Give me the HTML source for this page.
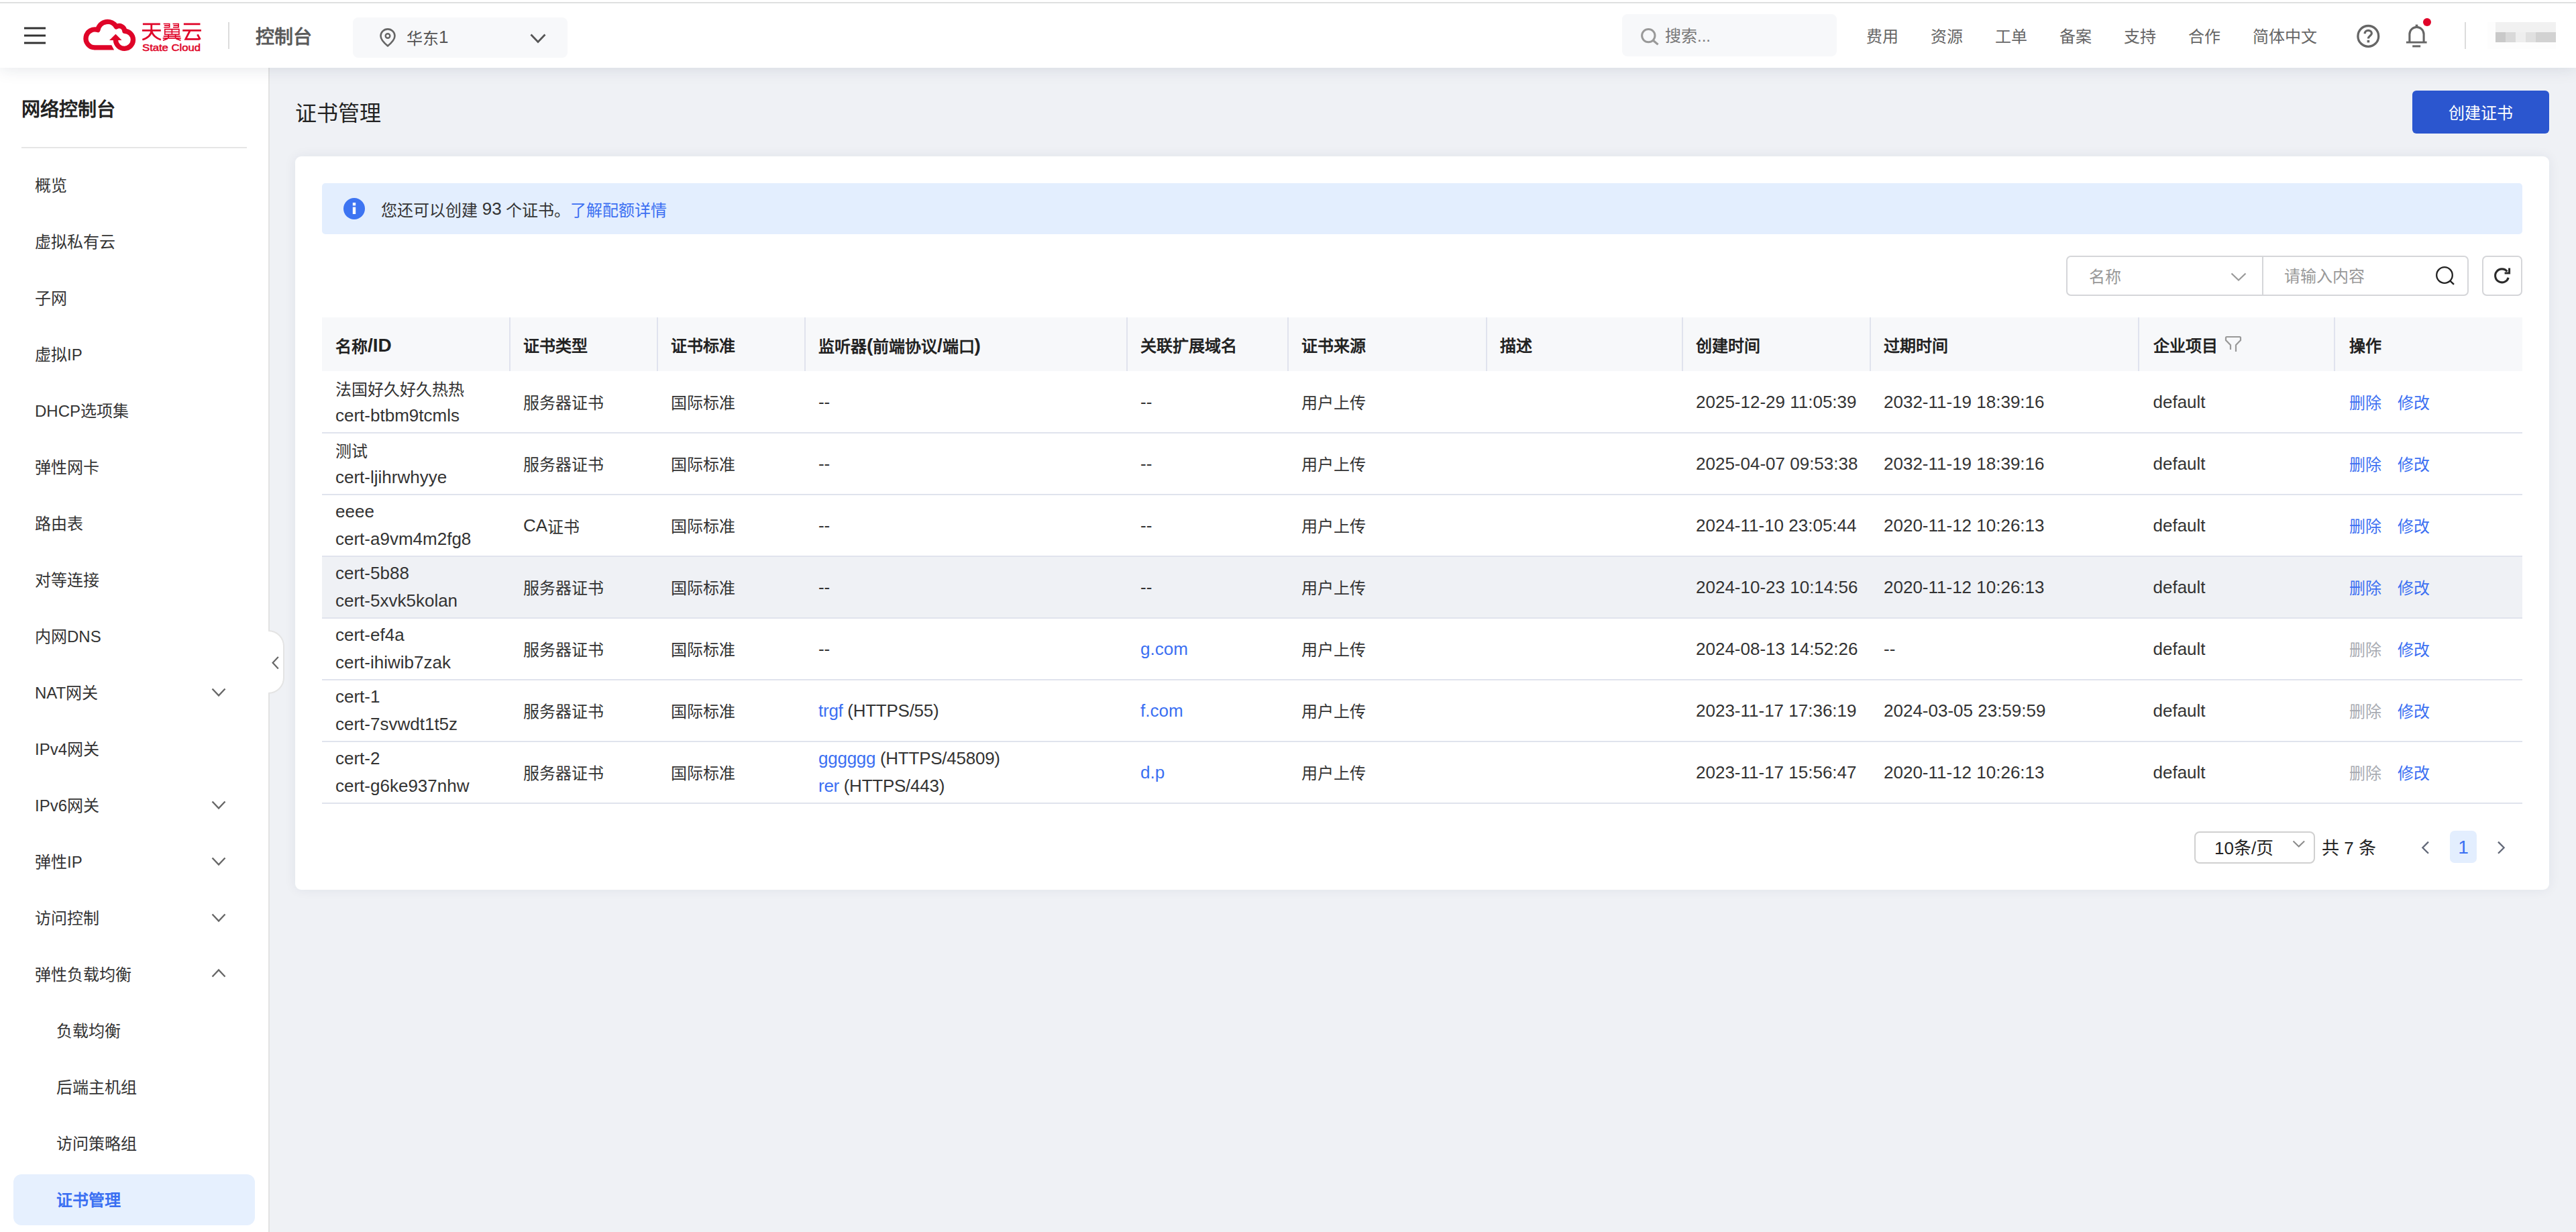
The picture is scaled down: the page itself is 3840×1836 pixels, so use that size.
<!DOCTYPE html>
<html lang="zh-CN">
<head>
<meta charset="utf-8">
<title>证书管理</title>
<style>
*{box-sizing:border-box;margin:0;padding:0}
html,body{width:3840px;height:1836px;overflow:hidden}
body{background:#eff1f5;font-family:"Liberation Sans",sans-serif;color:#333;font-size:24px;line-height:40px;position:relative}
.a{position:absolute}
svg{position:absolute;overflow:visible}
a{color:#3b6ff2;text-decoration:none}
.l{font-size:26px;position:relative;top:-2px}
.th .l{font-size:28px;top:-1px}
#hdr{left:0;top:0;width:3840px;height:101px;background:#fff;box-shadow:0 0 24px rgba(25,35,70,.13);z-index:5}
#topline{left:0;top:3px;width:3840px;height:2px;background:#dfe0e0;z-index:6}
.nav{top:35px;height:40px;line-height:40px;font-size:24px;color:#666;white-space:nowrap}
#side{left:0;top:100px;width:402px;height:1736px;background:#fff;border-right:2px solid #e2e2e2;z-index:2}
.mi{left:52px;height:40px;line-height:40px;font-size:24px;color:#333;white-space:nowrap}
.mi.sub{left:84px}
.mi .l{font-size:24px;top:0}
#card{left:440px;top:233px;width:3360px;height:1093px;background:#fff;border-radius:9px;box-shadow:0 0 18px rgba(30,40,80,.07)}
#title{left:440px;top:145px;height:48px;line-height:48px;font-size:32px;color:#222;white-space:nowrap}
#btn{left:3596px;top:135px;width:204px;height:64px;border-radius:6px;background:#2b56cf;color:#fff;font-size:24px;line-height:68px;text-align:center}
#alert{left:40px;top:40px;width:3280px;height:76px;border-radius:5px;background:#e3eefe}
.box{border:2px solid #d5d6d9;background:#fff}
.ph{color:#999;font-size:24px;line-height:40px;height:40px;white-space:nowrap}
#tbl{left:40px;top:240px;width:3280px}
.tr{position:absolute;left:0;width:3280px;height:92px;border-bottom:2px solid #e0e3ed;display:flex;align-items:center}
.th{position:absolute;left:0;top:0;width:3280px;height:80px;background:#f7f8fa;display:flex;align-items:center;font-weight:bold;color:#222}
.td{flex:none;padding-left:20px;line-height:40px;font-size:24px;white-space:nowrap;overflow:visible;position:relative;top:2px}
.th .td{height:80px;line-height:86px;top:0}
.dv{position:absolute;top:0;width:2px;height:80px;background:#e0e3ee}
.c0{width:280px}.c1{width:220px}.c2{width:220px}.c3{width:480px}.c4{width:240px}.c5{width:296px}.c6{width:292px}.c7{width:280px}.c8{width:400px}.c9{width:292px}.c10{width:280px}
.c9,.c10{padding-left:21.5px}
.hov{background:#eff1f5}
.c3 .l{letter-spacing:-.25px}
.dis{color:#a8abb2}
.op a,.op span{margin-right:24px}
.pg{height:40px;line-height:40px;font-size:26px;color:#222;white-space:nowrap}
</style>
</head>
<body>
<div class="a" id="topline"></div>
<div class="a" id="hdr">
  <svg style="left:36px;top:40px" width="32" height="26" viewBox="0 0 32 26"><path d="M0 2H32M0 13H32M0 24H32" stroke="#333" stroke-width="3.2" fill="none"/></svg>
  <svg style="left:110px;top:20px" width="210" height="70" viewBox="0 0 2576 859">
    <g fill="none" stroke="#df0428" stroke-width="90" stroke-linejoin="round">
      <path d="M384 625H382A166 166 0 1 1 440 302A182 182 0 0 1 777 243A101 101 0 0 1 930 322A160 160 0 1 1 765 490"/>
    </g>
    <path d="M380 580H690L737 670H380Z" fill="#df0428"/>
    <path d="M650 490L765 378L878 490Z" fill="#df0428"/>
    <g fill="none" stroke="#df0428" stroke-width="34">
      <path d="M1262 195H1580M1250 312H1592M1420 195V312C1420 400 1340 450 1255 482M1424 330C1450 410 1510 455 1592 482"/>
      <path d="M1640 190H1750V255H1648M1655 222H1750M1810 190H1915V255H1815M1822 222H1915" stroke-width="20"/>
      <path d="M1665 290H1925V385H1665ZM1665 337H1925M1795 290V385" stroke-width="20"/>
      <path d="M1640 418H1950M1628 452H1960M1730 385V452M1860 385V452M1715 462L1632 492M1870 462L1955 492" stroke-width="22"/>
      <path d="M2010 195H2312M1990 312H2330M2120 325L2045 470H2300M2262 385L2312 478"/>
    </g>
    <text x="1252" y="682" font-family="Liberation Sans, sans-serif" font-size="172" fill="#df0428" stroke="#df0428" stroke-width="6" textLength="1066" lengthAdjust="spacingAndGlyphs">State Cloud</text>
  </svg>
  <div class="a" style="left:340px;top:33px;width:2px;height:40px;background:#dcdcdc"></div>
  <div class="a" style="left:381px;top:36px;height:40px;line-height:40px;font-size:28px;font-weight:bold;color:#5a5a5a;white-space:nowrap">控制台</div>
  <div class="a" style="left:526px;top:26px;width:320px;height:60px;background:#f7f8fa;border-radius:8px"></div>
  <svg style="left:566px;top:42px" width="24" height="28" viewBox="0 0 24 28"><path d="M12 1.4C6.2 1.4 1.5 6 1.5 11.6C1.5 17.4 6.8 22.3 12 26.6C17.2 22.3 22.5 17.4 22.5 11.6C22.5 6 17.8 1.4 12 1.4Z" fill="none" stroke="#666" stroke-width="2.6" stroke-linejoin="round"/><circle cx="12" cy="11.5" r="3.3" fill="none" stroke="#666" stroke-width="2.4"/></svg>
  <div class="a" style="left:606px;top:37px;height:40px;line-height:40px;font-size:24px;color:#555;white-space:nowrap">华东<span class="l">1</span></div>
  <svg style="left:790px;top:50px" width="24" height="15" viewBox="0 0 24 15"><path d="M1.5 1.5L12 12.5L22.5 1.5" fill="none" stroke="#555" stroke-width="2.8"/></svg>
  <div class="a" style="left:2418px;top:21px;width:320px;height:63px;background:#f7f8fa;border-radius:8px"></div>
  <svg style="left:2444px;top:40px" width="30" height="30" viewBox="0 0 30 30"><circle cx="13.3" cy="13.1" r="9.7" fill="none" stroke="#999" stroke-width="3"/><path d="M20.3 20.2L27.6 26.4" stroke="#999" stroke-width="3.2" fill="none"/></svg>
  <div class="a nav" style="left:2482px;color:#777;top:34px">搜索...</div>
  <div class="a nav" style="left:2782px">费用</div><div class="a nav" style="left:2878px">资源</div><div class="a nav" style="left:2974px">工单</div><div class="a nav" style="left:3070px">备案</div><div class="a nav" style="left:3166px">支持</div><div class="a nav" style="left:3262px">合作</div><div class="a nav" style="left:3358px">简体中文</div>
  <svg style="left:3512px;top:36px" width="36" height="36" viewBox="0 0 36 36"><circle cx="18.3" cy="17.9" r="15.4" fill="none" stroke="#666" stroke-width="3.3"/><path d="M13.2 14.2C13.2 11.2 15.3 9.4 18.3 9.4C21.3 9.4 23.4 11.2 23.4 13.8C23.4 17.2 18.4 17.4 18.4 21.6" fill="none" stroke="#666" stroke-width="3.2"/><rect x="16.6" y="23.8" width="3.6" height="3.6" fill="#666"/></svg>
  <svg style="left:3586px;top:34px" width="34" height="40" viewBox="0 0 34 40"><path d="M5.9 29.1V17A10.6 10.6 0 0 1 27.1 17V29.1" fill="none" stroke="#666" stroke-width="3.1"/><path d="M0.9 29.1H31.6" stroke="#666" stroke-width="2.9" fill="none"/><path d="M10.2 34.9H22.2" stroke="#666" stroke-width="3" fill="none"/><path d="M16.5 2.6V6.6" stroke="#666" stroke-width="3.6" fill="none"/></svg>
  <div class="a" style="left:3612px;top:27px;width:12px;height:12px;border-radius:6px;background:#e00329"></div>
  <div class="a" style="left:3674px;top:33px;width:2px;height:40px;background:#dcdcdc"></div>
  <div class="a" style="left:3708px;top:33px;width:102px;height:40px;background:#fdfdfd"></div>
  <div class="a" style="left:3720px;top:33px;width:90px;height:15px;background:#f1f1f1"></div>
  <div class="a" style="left:3720px;top:48px;width:15px;height:15px;background:#c9c9c9"></div>
  <div class="a" style="left:3735px;top:48px;width:15px;height:15px;background:#d9d9d9"></div>
  <div class="a" style="left:3750px;top:48px;width:15px;height:15px;background:#eeeeee"></div>
  <div class="a" style="left:3765px;top:48px;width:15px;height:15px;background:#e0e0e0"></div>
  <div class="a" style="left:3780px;top:48px;width:30px;height:15px;background:#d2d2d2"></div>
</div>
<div class="a" id="side">
  <div class="a" style="left:32px;top:44px;height:40px;line-height:40px;font-size:28px;font-weight:bold;color:#222;white-space:nowrap">网络控制台</div>
  <div class="a" style="left:32px;top:119px;width:336px;height:2px;background:#e6e6e6"></div>
    <div class="a mi" style="top:157px">概览</div>
  <div class="a mi" style="top:241px">虚拟私有云</div>
  <div class="a mi" style="top:325px">子网</div>
  <div class="a mi" style="top:409px">虚拟<span class="l">IP</span></div>
  <div class="a mi" style="top:493px"><span class="l">DHCP</span>选项集</div>
  <div class="a mi" style="top:577px">弹性网卡</div>
  <div class="a mi" style="top:661px">路由表</div>
  <div class="a mi" style="top:745px">对等连接</div>
  <div class="a mi" style="top:829px">内网<span class="l">DNS</span></div>
  <div class="a mi" style="top:913px"><span class="l">NAT</span>网关</div>
  <svg style="left:315px;top:925px" width="22" height="14" viewBox="0 0 22 14"><path d="M1.5 1.5L11 11.5L20.5 1.5" fill="none" stroke="#666" stroke-width="2.4"/></svg>
  <div class="a mi" style="top:997px"><span class="l">IPv4</span>网关</div>
  <div class="a mi" style="top:1081px"><span class="l">IPv6</span>网关</div>
  <svg style="left:315px;top:1093px" width="22" height="14" viewBox="0 0 22 14"><path d="M1.5 1.5L11 11.5L20.5 1.5" fill="none" stroke="#666" stroke-width="2.4"/></svg>
  <div class="a mi" style="top:1165px">弹性<span class="l">IP</span></div>
  <svg style="left:315px;top:1177px" width="22" height="14" viewBox="0 0 22 14"><path d="M1.5 1.5L11 11.5L20.5 1.5" fill="none" stroke="#666" stroke-width="2.4"/></svg>
  <div class="a mi" style="top:1249px">访问控制</div>
  <svg style="left:315px;top:1261px" width="22" height="14" viewBox="0 0 22 14"><path d="M1.5 1.5L11 11.5L20.5 1.5" fill="none" stroke="#666" stroke-width="2.4"/></svg>
  <div class="a mi" style="top:1333px">弹性负载均衡</div>
  <svg style="left:315px;top:1343px" width="22" height="14" viewBox="0 0 22 14"><path d="M1.5 12.5L11 2.5L20.5 12.5" fill="none" stroke="#666" stroke-width="2.4"/></svg>
  <div class="a mi sub" style="top:1417px">负载均衡</div>
  <div class="a mi sub" style="top:1501px">后端主机组</div>
  <div class="a mi sub" style="top:1585px">访问策略组</div>
  <div class="a" style="left:20px;top:1650px;width:360px;height:76px;border-radius:12px;background:#e6f0fe"></div>
  <div class="a mi sub" style="top:1669px;color:#3a6ff2;font-weight:bold">证书管理</div>
</div>
<div class="a" id="title">证书管理</div>
<div class="a" id="btn">创建证书</div>
<div class="a" id="card">
  <div class="a" id="alert">
    <svg style="left:32px;top:22px" width="32" height="32" viewBox="0 0 32 32"><circle cx="16" cy="16" r="16" fill="#3d74f2"/><rect x="13.8" y="7" width="4.4" height="4.4" fill="#fff"/><rect x="13.8" y="13.6" width="4.4" height="10.4" fill="#fff"/></svg>
    <div class="a" style="left:88px;top:20px;height:40px;line-height:40px;font-size:24px;color:#333;white-space:nowrap">您还可以创建 <span class="l">93</span> 个证书。<a>了解配额详情</a></div>
  </div>
  <div class="a box" style="left:2640px;top:148px;width:296px;height:60px;border-radius:7px 0 0 7px"></div>
  <div class="a box" style="left:2932px;top:148px;width:308px;height:60px;border-radius:0 7px 7px 0"></div>
  <div class="a ph" style="left:2674px;top:160px">名称</div>
  <svg style="left:2885px;top:173px" width="24" height="14" viewBox="0 0 24 14"><path d="M1.5 1.5L12 11.5L22.5 1.5" fill="none" stroke="#999" stroke-width="2.2"/></svg>
  <div class="a ph" style="left:2965px;top:159px">请输入内容</div>
  <svg style="left:3190px;top:163px" width="30" height="30" viewBox="0 0 30 30"><circle cx="14" cy="14" r="11.8" fill="none" stroke="#222" stroke-width="2.3"/><path d="M22.4 22.6L28 27.8" stroke="#222" stroke-width="2.4" fill="none"/></svg>
  <div class="a box" style="left:3260px;top:148px;width:60px;height:60px;border-radius:7px"></div>
  <svg style="left:3276px;top:164px" width="28" height="28" viewBox="0 0 28 28"><path d="M23.2 16.7A10 10 0 1 1 21.4 7.6" fill="none" stroke="#2b2b2b" stroke-width="3.1"/><path d="M24.6 2.6V10H17.6" fill="none" stroke="#2b2b2b" stroke-width="3"/></svg>
  <div class="a" id="tbl">
    <div class="th"><div class="td c0">名称<span class="l">/ID</span></div><div class="td c1">证书类型</div><div class="td c2">证书标准</div><div class="td c3">监听器<span class="l">(</span>前端协议<span class="l">/</span>端口<span class="l">)</span></div><div class="td c4">关联扩展域名</div><div class="td c5">证书来源</div><div class="td c6">描述</div><div class="td c7">创建时间</div><div class="td c8">过期时间</div><div class="td c9">企业项目<svg style="left:129px;top:28px" width="24" height="24" viewBox="0 0 24 24"><path d="M8 20V13.2L1 6V2.4A1.4 1.4 0 0 1 2.4 1H21.6A1.4 1.4 0 0 1 23 2.4V6L16 13.2V23" fill="none" stroke="#999" stroke-width="2.2"/></svg></div><div class="td c10">操作</div><div class="dv" style="left:279px"></div><div class="dv" style="left:499px"></div><div class="dv" style="left:719px"></div><div class="dv" style="left:1199px"></div><div class="dv" style="left:1439px"></div><div class="dv" style="left:1735px"></div><div class="dv" style="left:2027px"></div><div class="dv" style="left:2307px"></div><div class="dv" style="left:2707px"></div><div class="dv" style="left:2999px"></div></div>
  <div class="tr" style="top:81px"><div class="td c0">法国好久好久热热<br><span class="l">cert-btbm9tcmls</span></div><div class="td c1">服务器证书</div><div class="td c2">国际标准</div><div class="td c3"><span class="l">--</span></div><div class="td c4"><span class="l">--</span></div><div class="td c5">用户上传</div><div class="td c6"></div><div class="td c7"><span class="l">2025-12-29 11:05:39</span></div><div class="td c8"><span class="l">2032-11-19 18:39:16</span></div><div class="td c9"><span class="l">default</span></div><div class="td c10 op"><a>删除</a><a>修改</a></div></div>
  <div class="tr" style="top:173px"><div class="td c0">测试<br><span class="l">cert-ljihrwhyye</span></div><div class="td c1">服务器证书</div><div class="td c2">国际标准</div><div class="td c3"><span class="l">--</span></div><div class="td c4"><span class="l">--</span></div><div class="td c5">用户上传</div><div class="td c6"></div><div class="td c7"><span class="l">2025-04-07 09:53:38</span></div><div class="td c8"><span class="l">2032-11-19 18:39:16</span></div><div class="td c9"><span class="l">default</span></div><div class="td c10 op"><a>删除</a><a>修改</a></div></div>
  <div class="tr" style="top:265px"><div class="td c0"><span class="l">eeee</span><br><span class="l">cert-a9vm4m2fg8</span></div><div class="td c1"><span class="l">CA</span>证书</div><div class="td c2">国际标准</div><div class="td c3"><span class="l">--</span></div><div class="td c4"><span class="l">--</span></div><div class="td c5">用户上传</div><div class="td c6"></div><div class="td c7"><span class="l">2024-11-10 23:05:44</span></div><div class="td c8"><span class="l">2020-11-12 10:26:13</span></div><div class="td c9"><span class="l">default</span></div><div class="td c10 op"><a>删除</a><a>修改</a></div></div>
  <div class="tr hov" style="top:357px"><div class="td c0"><span class="l">cert-5b88</span><br><span class="l">cert-5xvk5kolan</span></div><div class="td c1">服务器证书</div><div class="td c2">国际标准</div><div class="td c3"><span class="l">--</span></div><div class="td c4"><span class="l">--</span></div><div class="td c5">用户上传</div><div class="td c6"></div><div class="td c7"><span class="l">2024-10-23 10:14:56</span></div><div class="td c8"><span class="l">2020-11-12 10:26:13</span></div><div class="td c9"><span class="l">default</span></div><div class="td c10 op"><a>删除</a><a>修改</a></div></div>
  <div class="tr" style="top:449px"><div class="td c0"><span class="l">cert-ef4a</span><br><span class="l">cert-ihiwib7zak</span></div><div class="td c1">服务器证书</div><div class="td c2">国际标准</div><div class="td c3"><span class="l">--</span></div><div class="td c4"><a><span class="l">g.com</span></a></div><div class="td c5">用户上传</div><div class="td c6"></div><div class="td c7"><span class="l">2024-08-13 14:52:26</span></div><div class="td c8"><span class="l">--</span></div><div class="td c9"><span class="l">default</span></div><div class="td c10 op"><span class="dis">删除</span><a>修改</a></div></div>
  <div class="tr" style="top:541px"><div class="td c0"><span class="l">cert-1</span><br><span class="l">cert-7svwdt1t5z</span></div><div class="td c1">服务器证书</div><div class="td c2">国际标准</div><div class="td c3"><a><span class="l">trgf</span></a> <span class="l">(HTTPS/55)</span></div><div class="td c4"><a><span class="l">f.com</span></a></div><div class="td c5">用户上传</div><div class="td c6"></div><div class="td c7"><span class="l">2023-11-17 17:36:19</span></div><div class="td c8"><span class="l">2024-03-05 23:59:59</span></div><div class="td c9"><span class="l">default</span></div><div class="td c10 op"><span class="dis">删除</span><a>修改</a></div></div>
  <div class="tr" style="top:633px"><div class="td c0"><span class="l">cert-2</span><br><span class="l">cert-g6ke937nhw</span></div><div class="td c1">服务器证书</div><div class="td c2">国际标准</div><div class="td c3"><a><span class="l">gggggg</span></a> <span class="l">(HTTPS/45809)</span><br><a><span class="l">rer</span></a> <span class="l">(HTTPS/443)</span></div><div class="td c4"><a><span class="l">d.p</span></a></div><div class="td c5">用户上传</div><div class="td c6"></div><div class="td c7"><span class="l">2023-11-17 15:56:47</span></div><div class="td c8"><span class="l">2020-11-12 10:26:13</span></div><div class="td c9"><span class="l">default</span></div><div class="td c10 op"><span class="dis">删除</span><a>修改</a></div></div>
  </div>
  <div class="a box" style="left:2831px;top:1006px;width:180px;height:48px;border-radius:8px;border-color:#d0d0d0"></div>
  <div class="a pg" style="left:2861px;top:1011px">10条/页</div>
  <svg style="left:2977px;top:1019px" width="20" height="12" viewBox="0 0 20 12"><path d="M1.5 1.5L9.8 9.5L18.1 1.5" fill="none" stroke="#8a8a8a" stroke-width="2"/></svg>
  <div class="a pg" style="left:3021px;top:1011px">共 7 条</div>
  <svg style="left:3169px;top:1020px" width="14" height="20" viewBox="0 0 14 20"><path d="M11 1.6L2.4 10.2L11 18.8" fill="none" stroke="#626878" stroke-width="2.3"/></svg>
  <div class="a" style="left:3212px;top:1005px;width:40px;height:48px;border-radius:7px;background:#e3eefe;color:#3a6ff2;font-size:28px;line-height:50px;text-align:center">1</div>
  <svg style="left:3281px;top:1020px" width="14" height="20" viewBox="0 0 14 20"><path d="M3 1.6L11.6 10.2L3 18.8" fill="none" stroke="#626878" stroke-width="2.3"/></svg>
</div>
<div class="a" style="left:400px;top:939px;width:24px;height:95px;background:#fff;border:2px solid #e4e4e4;border-left:none;border-radius:0 24px 24px 0;z-index:3"></div>
<svg style="left:404px;top:977px;z-index:4" width="14" height="22" viewBox="0 0 14 22"><path d="M10.8 2L2.6 10.8L10.8 19.6" fill="none" stroke="#666" stroke-width="2.2"/></svg>
</body>
</html>
